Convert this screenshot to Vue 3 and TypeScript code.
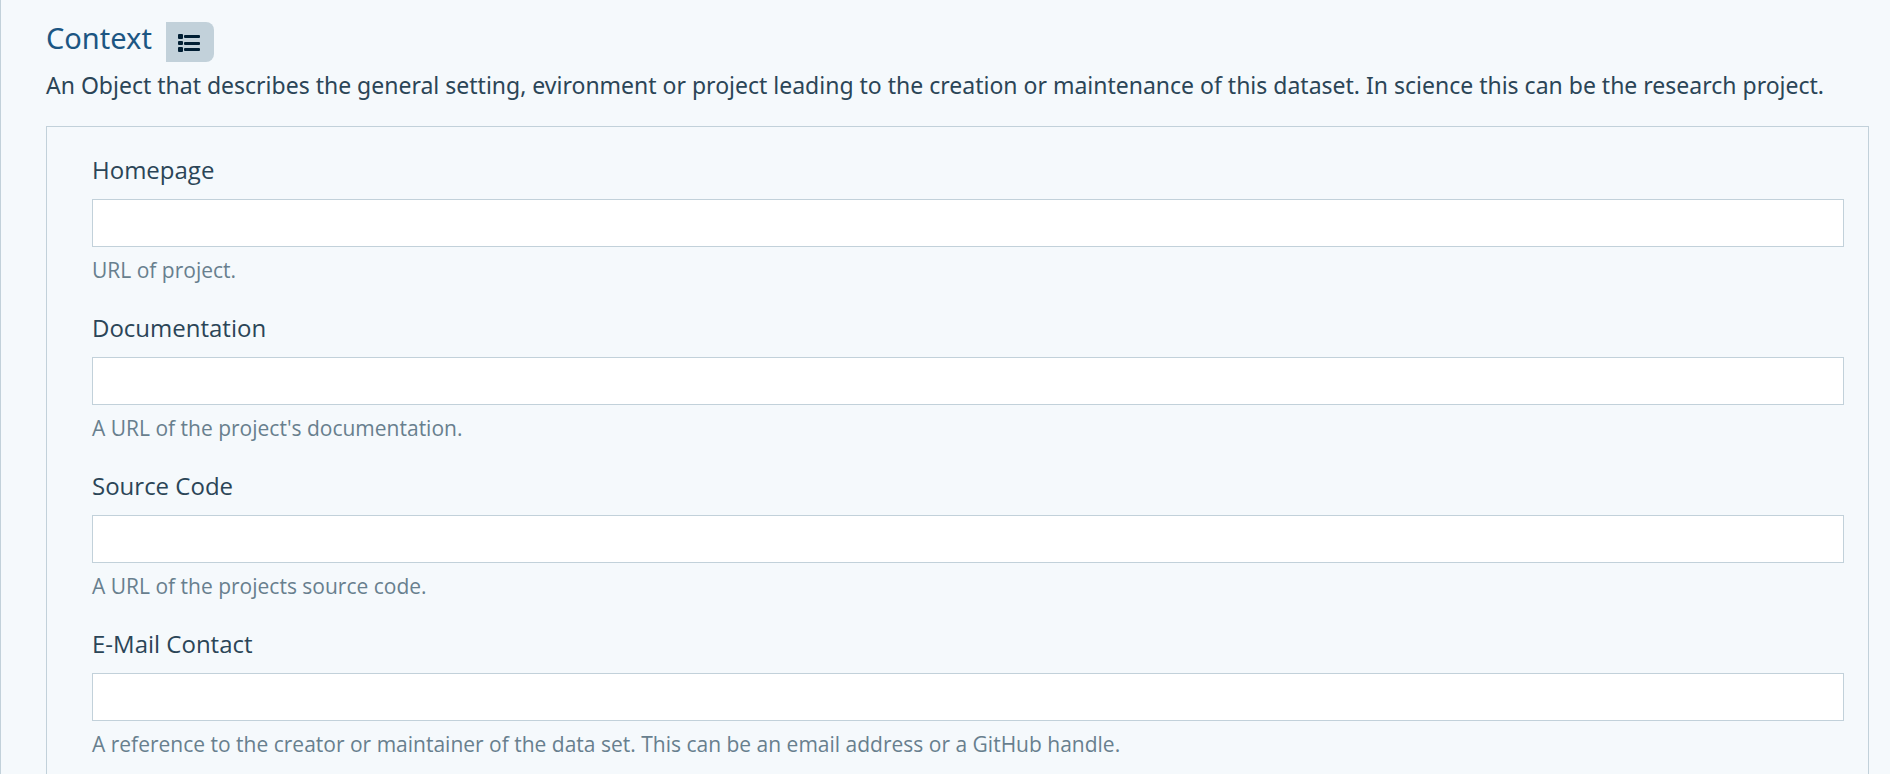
<script setup lang="ts">
import { reactive } from 'vue'

interface Field {
  id: string
  label: string
  type: string
  help: string
}

const fields: Field[] = [
  { id: 'homepage', label: 'Homepage', type: 'url', help: 'URL of project.' },
  { id: 'documentation', label: 'Documentation', type: 'url', help: "A URL of the project's documentation." },
  { id: 'source-code', label: 'Source Code', type: 'url', help: 'A URL of the projects source code.' },
  {
    id: 'contact',
    label: 'E-Mail Contact',
    type: 'text',
    help: 'A reference to the creator or maintainer of the data set. This can be an email address or a GitHub handle.',
  },
]

const values = reactive<Record<string, string>>({})
</script>

<template>
  <section class="context">
    <header class="heading">
      <h2>Context</h2>
      <button type="button" class="list-button" aria-label="Object properties">
        <svg viewBox="0 0 22 18" aria-hidden="true">
          <rect x="0" y="0" width="5" height="5" rx="1" />
          <rect x="6" y="1" width="16" height="3" rx="1" />
          <rect x="0" y="7" width="5" height="4" rx="1" />
          <rect x="6" y="8" width="16" height="3" rx="1" />
          <rect x="0" y="13" width="5" height="5" rx="1" />
          <rect x="6" y="14" width="16" height="3" rx="1" />
        </svg>
      </button>
    </header>
    <p class="description">
      An Object that describes the general setting, evironment or project leading to the creation or maintenance of this dataset. In science this can be the research project.
    </p>
    <form class="fields" @submit.prevent>
      <div v-for="field in fields" :key="field.id" class="field">
        <label :for="field.id">{{ field.label }}</label>
        <input :id="field.id" v-model="values[field.id]" :type="field.type" :aria-describedby="field.id + '-help'" />
        <small :id="field.id + '-help'">{{ field.help }}</small>
      </div>
    </form>
  </section>
</template>

<style>
body {
  background: #f5f9fc;
}
</style>

<style scoped>
.context {
  box-sizing: border-box;
  min-height: 100vh;
  padding: 20px 21px 0 45px;
  border-left: 1px solid #c2d1da;
  color: #2b4557;
  font-family: "Noto Sans", "Open Sans", sans-serif;
  font-size: 23px;
  line-height: 32px;
}

.heading {
  display: flex;
  align-items: flex-start;
  gap: 14px;
}

h2 {
  margin: 0;
  color: #1c5683;
  font-size: 29px;
  font-weight: 400;
  line-height: 36px;
}

.list-button {
  display: grid;
  place-items: center;
  width: 48px;
  height: 40px;
  margin-top: 2px;
  padding: 2px 2px 0 0;
  border: 0;
  border-radius: 0 8px 8px 0;
  background: #c2d1da;
  color: #001e33;
  cursor: pointer;
}

.list-button svg {
  width: 22px;
  height: 18px;
  fill: currentColor;
}

.description {
  margin: 7px 0 25px;
}

.fields {
  display: flex;
  flex-direction: column;
  gap: 26px;
  padding: 27px 24px 0 45px;
  border: 1px solid #c2d1da;
  border-bottom: 0;
  font-family: "Open Sans", "Noto Sans", sans-serif;
  font-size: 24px;
}

.field {
  display: flex;
  flex-direction: column;
}

.field:last-child {
  padding-bottom: 16px;
}

input {
  box-sizing: border-box;
  width: 100%;
  height: 48px;
  margin: 13px 0 7px;
  padding: 8px 12px;
  border: 1px solid #c2d1da;
  border-radius: 0;
  background: #fff;
  color: inherit;
  font: inherit;
}

small {
  color: #687f8e;
  font-size: 21px;
}
</style>
